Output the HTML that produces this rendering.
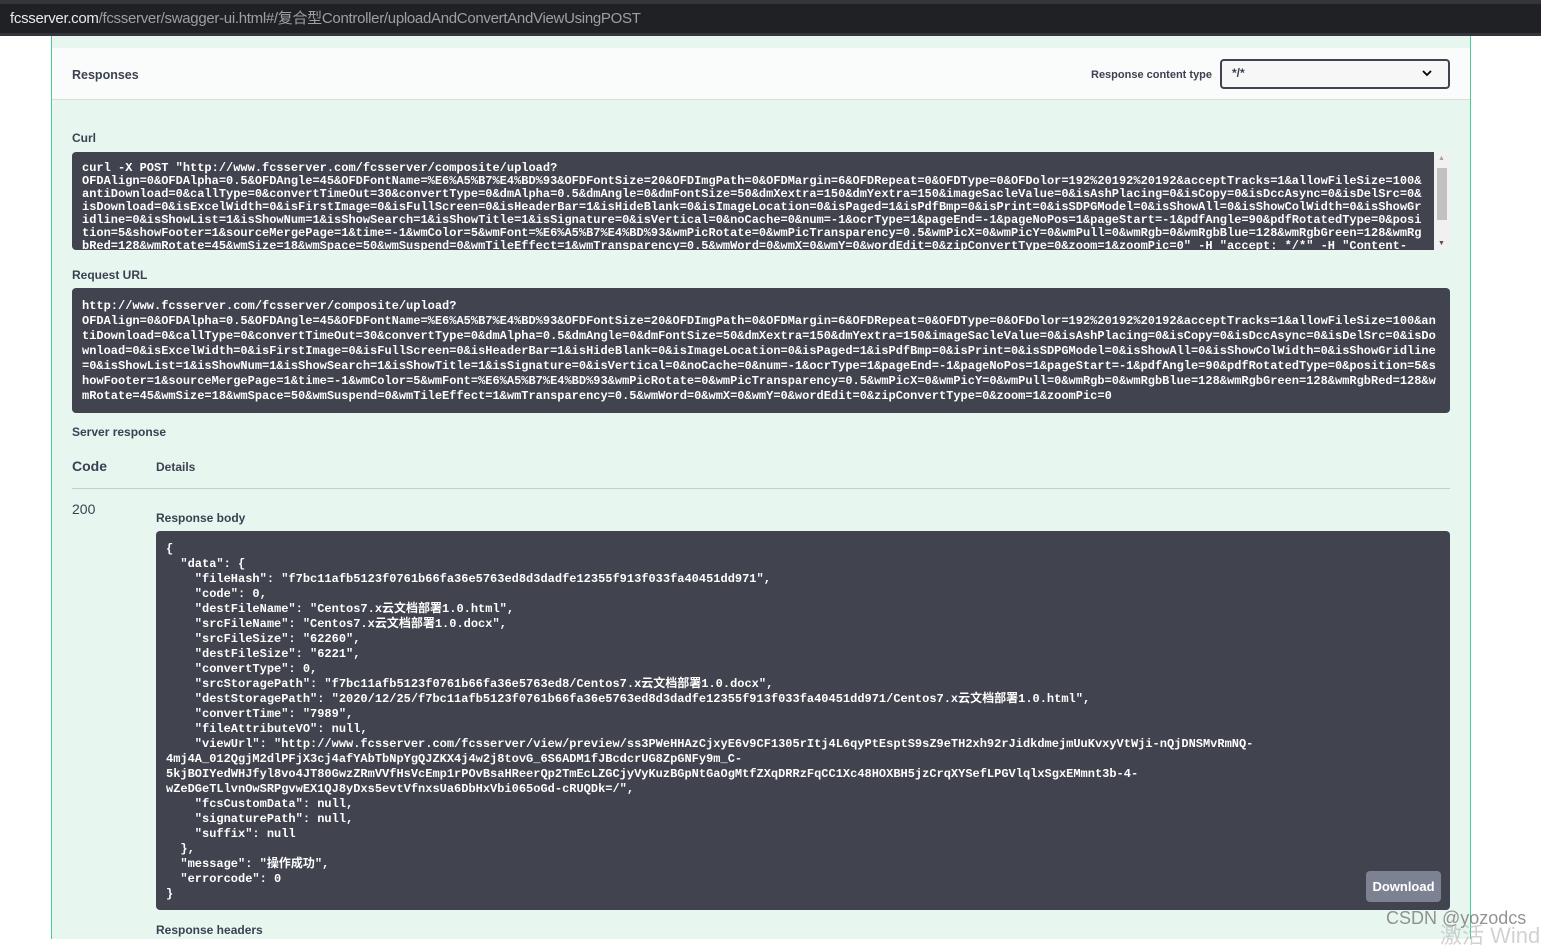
<!DOCTYPE html>
<html><head><meta charset="utf-8"><style>
*{margin:0;padding:0;box-sizing:border-box}
body{width:1541px;height:939px;overflow:hidden;background:#fff;font-family:"Liberation Sans","Noto Sans CJK SC",sans-serif;position:relative}
.top{position:absolute;left:0;top:0;width:1541px;height:36px;background:#35363a}
.addr{position:absolute;left:0;top:4px;width:1541px;height:29px;background:#202124;color:#9aa0a6;font-size:15px;line-height:29px;padding-left:10px;letter-spacing:-0.3px}
.addr b{color:#e8eaed;font-weight:normal}
.panel{position:absolute;left:51px;top:36px;width:1420px;height:903px;background:#e8f6f0;border-left:1px solid #49cc90;border-right:1px solid #49cc90}
.hdr{position:absolute;left:0;top:12px;width:1418px;height:52px;background:#fafcfb;border-bottom:1px solid #ddd}
.lbl{position:absolute;font-weight:bold;font-size:12px;color:#3b4151;white-space:nowrap}
.sel{position:absolute;left:1168px;top:11px;width:230px;height:30px;border:2px solid #41444e;border-radius:4px;background:#f7f7f7;font-size:12px;font-weight:bold;color:#3b4151;padding:5px 10px}
.code{position:absolute;background:#41444e;color:#fff;font-family:"Liberation Mono","Noto Sans CJK SC",monospace;font-size:12px;white-space:pre;overflow:hidden;border-radius:4px;font-weight:bold}
.dl{position:absolute;left:1314px;top:835px;width:75px;height:31px;background:#7d8293;border-radius:4px;color:#fff;font-weight:bold;font-size:13px;text-align:center;line-height:31px}
</style></head><body>
<div class="top"></div>
<div class="addr"><b>fcsserver.com</b>/fcsserver/swagger-ui.html#/复合型Controller/uploadAndConvertAndViewUsingPOST</div>
<div class="panel">
<div class="hdr">
<div class="lbl" style="left:20px;top:20px;font-size:12.5px">Responses</div>
<div class="lbl" style="left:1039px;top:21px;font-size:11px">Response content type</div>
<div class="sel">*/*<svg style="position:absolute;right:16px;top:9px" width="10" height="7" viewBox="0 0 10 7"><path d="M1 1l4 4 4-4" stroke="#000" stroke-width="1.8" fill="none"/></svg></div>
</div>
<div class="lbl" style="left:20px;top:95px">Curl</div>
<div class="code" style="left:20px;top:116px;width:1362px;height:98px;line-height:13px;padding:10px 10px;border-radius:4px 0 0 4px">curl -X POST "http://www.fcsserver.com/fcsserver/composite/upload?
OFDAlign=0&amp;OFDAlpha=0.5&amp;OFDAngle=45&amp;OFDFontName=%E6%A5%B7%E4%BD%93&amp;OFDFontSize=20&amp;OFDImgPath=0&amp;OFDMargin=6&amp;OFDRepeat=0&amp;OFDType=0&amp;OFDolor=192%20192%20192&amp;acceptTracks=1&amp;allowFileSize=100&amp;
antiDownload=0&amp;callType=0&amp;convertTimeOut=30&amp;convertType=0&amp;dmAlpha=0.5&amp;dmAngle=0&amp;dmFontSize=50&amp;dmXextra=150&amp;dmYextra=150&amp;imageSacleValue=0&amp;isAshPlacing=0&amp;isCopy=0&amp;isDccAsync=0&amp;isDelSrc=0&amp;
isDownload=0&amp;isExcelWidth=0&amp;isFirstImage=0&amp;isFullScreen=0&amp;isHeaderBar=1&amp;isHideBlank=0&amp;isImageLocation=0&amp;isPaged=1&amp;isPdfBmp=0&amp;isPrint=0&amp;isSDPGModel=0&amp;isShowAll=0&amp;isShowColWidth=0&amp;isShowGr
idline=0&amp;isShowList=1&amp;isShowNum=1&amp;isShowSearch=1&amp;isShowTitle=1&amp;isSignature=0&amp;isVertical=0&amp;noCache=0&amp;num=-1&amp;ocrType=1&amp;pageEnd=-1&amp;pageNoPos=1&amp;pageStart=-1&amp;pdfAngle=90&amp;pdfRotatedType=0&amp;posi
tion=5&amp;showFooter=1&amp;sourceMergePage=1&amp;time=-1&amp;wmColor=5&amp;wmFont=%E6%A5%B7%E4%BD%93&amp;wmPicRotate=0&amp;wmPicTransparency=0.5&amp;wmPicX=0&amp;wmPicY=0&amp;wmPull=0&amp;wmRgb=0&amp;wmRgbBlue=128&amp;wmRgbGreen=128&amp;wmRg
bRed=128&amp;wmRotate=45&amp;wmSize=18&amp;wmSpace=50&amp;wmSuspend=0&amp;wmTileEffect=1&amp;wmTransparency=0.5&amp;wmWord=0&amp;wmX=0&amp;wmY=0&amp;wordEdit=0&amp;zipConvertType=0&amp;zoom=1&amp;zoomPic=0" -H "accept: */*" -H "Content-</div>
<div style="position:absolute;left:1382px;top:116px;width:16px;height:98px;background:#f1f1f1"><div style="position:absolute;left:3px;top:16px;width:10px;height:52px;background:#c1c1c1"></div><div style="position:absolute;left:4px;top:3px;font-size:7px;color:#a3a3a3">▲</div><div style="position:absolute;left:4px;bottom:3px;font-size:7px;color:#505050">▼</div></div>
<div class="lbl" style="left:20px;top:232px">Request URL</div>
<div class="code" style="left:20px;top:252px;width:1378px;height:125px;line-height:15px;padding:11px 10px">http://www.fcsserver.com/fcsserver/composite/upload?
OFDAlign=0&amp;OFDAlpha=0.5&amp;OFDAngle=45&amp;OFDFontName=%E6%A5%B7%E4%BD%93&amp;OFDFontSize=20&amp;OFDImgPath=0&amp;OFDMargin=6&amp;OFDRepeat=0&amp;OFDType=0&amp;OFDolor=192%20192%20192&amp;acceptTracks=1&amp;allowFileSize=100&amp;an
tiDownload=0&amp;callType=0&amp;convertTimeOut=30&amp;convertType=0&amp;dmAlpha=0.5&amp;dmAngle=0&amp;dmFontSize=50&amp;dmXextra=150&amp;dmYextra=150&amp;imageSacleValue=0&amp;isAshPlacing=0&amp;isCopy=0&amp;isDccAsync=0&amp;isDelSrc=0&amp;isDo
wnload=0&amp;isExcelWidth=0&amp;isFirstImage=0&amp;isFullScreen=0&amp;isHeaderBar=1&amp;isHideBlank=0&amp;isImageLocation=0&amp;isPaged=1&amp;isPdfBmp=0&amp;isPrint=0&amp;isSDPGModel=0&amp;isShowAll=0&amp;isShowColWidth=0&amp;isShowGridline
=0&amp;isShowList=1&amp;isShowNum=1&amp;isShowSearch=1&amp;isShowTitle=1&amp;isSignature=0&amp;isVertical=0&amp;noCache=0&amp;num=-1&amp;ocrType=1&amp;pageEnd=-1&amp;pageNoPos=1&amp;pageStart=-1&amp;pdfAngle=90&amp;pdfRotatedType=0&amp;position=5&amp;s
howFooter=1&amp;sourceMergePage=1&amp;time=-1&amp;wmColor=5&amp;wmFont=%E6%A5%B7%E4%BD%93&amp;wmPicRotate=0&amp;wmPicTransparency=0.5&amp;wmPicX=0&amp;wmPicY=0&amp;wmPull=0&amp;wmRgb=0&amp;wmRgbBlue=128&amp;wmRgbGreen=128&amp;wmRgbRed=128&amp;w
mRotate=45&amp;wmSize=18&amp;wmSpace=50&amp;wmSuspend=0&amp;wmTileEffect=1&amp;wmTransparency=0.5&amp;wmWord=0&amp;wmX=0&amp;wmY=0&amp;wordEdit=0&amp;zipConvertType=0&amp;zoom=1&amp;zoomPic=0</div>
<div class="lbl" style="left:20px;top:389px">Server response</div>
<div class="lbl" style="left:20px;top:422px;font-size:14px">Code</div>
<div class="lbl" style="left:104px;top:424px">Details</div>
<div style="position:absolute;left:20px;top:452px;width:1378px;height:1px;background:#c9cccf"></div>
<div style="position:absolute;left:20px;top:465px;font-size:14px;color:#3b4151">200</div>
<div class="lbl" style="left:104px;top:475px">Response body</div>
<div class="code" style="left:104px;top:495px;width:1294px;height:379px;line-height:15px;padding:11px 10px">{
  "data": {
    "fileHash": "f7bc11afb5123f0761b66fa36e5763ed8d3dadfe12355f913f033fa40451dd971",
    "code": 0,
    "destFileName": "Centos7.x云文档部署1.0.html",
    "srcFileName": "Centos7.x云文档部署1.0.docx",
    "srcFileSize": "62260",
    "destFileSize": "6221",
    "convertType": 0,
    "srcStoragePath": "f7bc11afb5123f0761b66fa36e5763ed8/Centos7.x云文档部署1.0.docx",
    "destStoragePath": "2020/12/25/f7bc11afb5123f0761b66fa36e5763ed8d3dadfe12355f913f033fa40451dd971/Centos7.x云文档部署1.0.html",
    "convertTime": "7989",
    "fileAttributeVO": null,
    "viewUrl": "http://www.fcsserver.com/fcsserver/view/preview/ss3PWeHHAzCjxyE6v9CF1305rItj4L6qyPtEsptS9sZ9eTH2xh92rJidkdmejmUuKvxyVtWji-nQjDNSMvRmNQ-
4mj4A_012QgjM2dlPFjX3cj4afYAbTbNpYgQJZKX4j4w2j8tovG_6S6ADM1fJBcdcrUG8ZpGNFy9m_C-
5kjBOIYedWHJfyl8vo4JT80GwzZRmVVfHsVcEmp1rPOvBsaHReerQp2TmEcLZGCjyVyKuzBGpNtGaOgMtfZXqDRRzFqCC1Xc48HOXBH5jzCrqXYSefLPGVlqlxSgxEMmnt3b-4-
wZeDGeTLlvnOwSRPgvwEX1QJ8yDxs5evtVfnxsUa6DbHxVbi065oGd-cRUQDk=/",
    "fcsCustomData": null,
    "signaturePath": null,
    "suffix": null
  },
  "message": "操作成功",
  "errorcode": 0
}</div>
<div class="dl">Download</div>
<div class="lbl" style="left:104px;top:887px">Response headers</div>
</div>
<div style="position:absolute;left:1386px;top:908px;font-size:18px;color:rgba(120,120,120,0.8);white-space:nowrap">CSDN @yozodcs</div>
<div style="position:absolute;left:1440px;top:918px;font-size:22px;color:rgba(180,180,180,0.6);white-space:nowrap">激活 Windo</div>
</body></html>
